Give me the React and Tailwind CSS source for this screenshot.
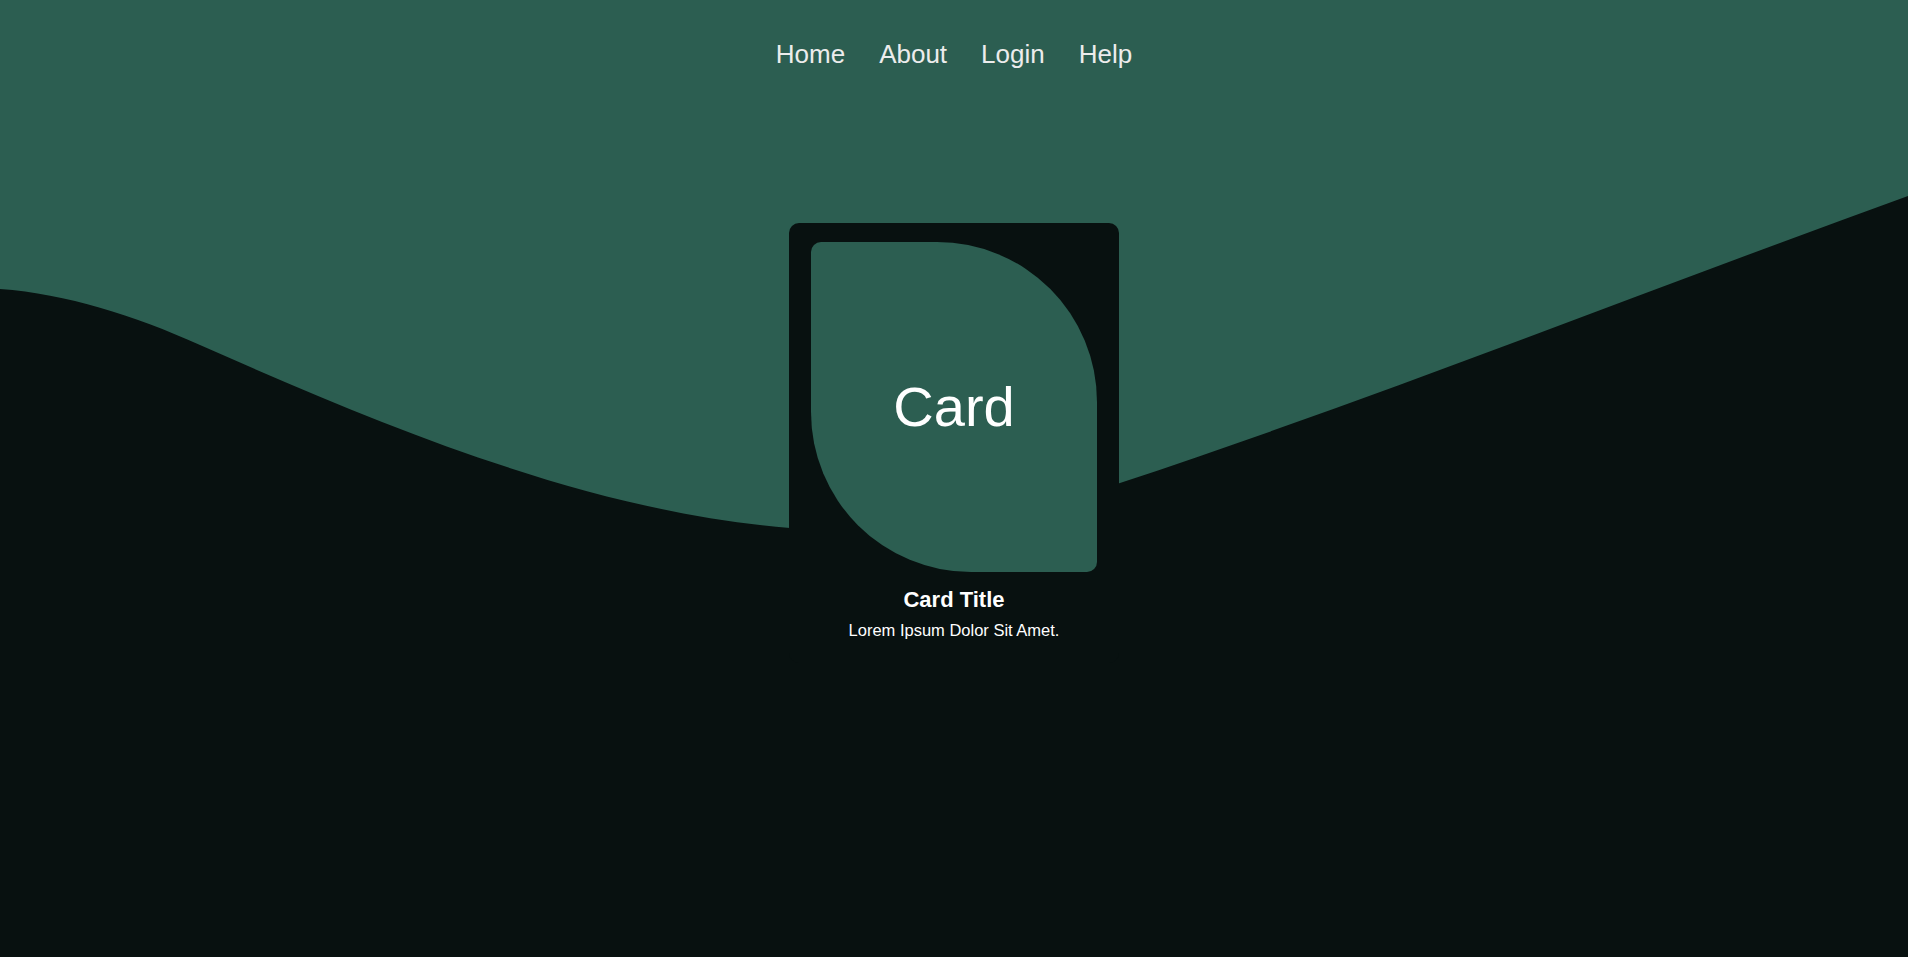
export default function App() {
  const font = { fontFamily: '"Liberation Sans", Arial, sans-serif' };
  return (
    <div className="relative w-full h-screen overflow-hidden bg-[#2c5e51]" style={font}>
      <svg
        className="absolute inset-0 w-full h-full"
        viewBox="0 0 1908 957"
        preserveAspectRatio="none"
        aria-hidden="true"
      >
        <path
          fill="#081110"
          d="M0,289 C67,294 133,315 200,345 C397,432 593,512 790,528 C900,540 1010,520 1120,483 C1383,396 1645,291 1908,196 L1908,957 L0,957 Z"
        />
      </svg>
      <div className="relative flex flex-col items-center">
        <nav className="flex gap-[34px] pt-[39px] text-[26px] leading-[30px] text-[#ececec]">
          <a href="#">Home</a>
          <a href="#">About</a>
          <a href="#">Login</a>
          <a href="#">Help</a>
        </nav>
        <div className="mt-[154px] w-[330px] rounded-[10px] bg-[#081110] px-[22px] pt-[19px] pb-6 flex flex-col items-center">
          <div className="w-[286px] h-[330px] rounded-[10px_160px_10px_160px] bg-[#2c5e51] flex items-center justify-center">
            <span className="text-[56px] leading-none text-white">Card</span>
          </div>
          <h2 className="mt-[16px] text-[22px] leading-[24px] font-bold text-white">Card Title</h2>
          <p className="mt-[9px] text-[16.5px] leading-[18px] text-white">Lorem Ipsum Dolor Sit Amet.</p>
        </div>
      </div>
    </div>
  );
}
